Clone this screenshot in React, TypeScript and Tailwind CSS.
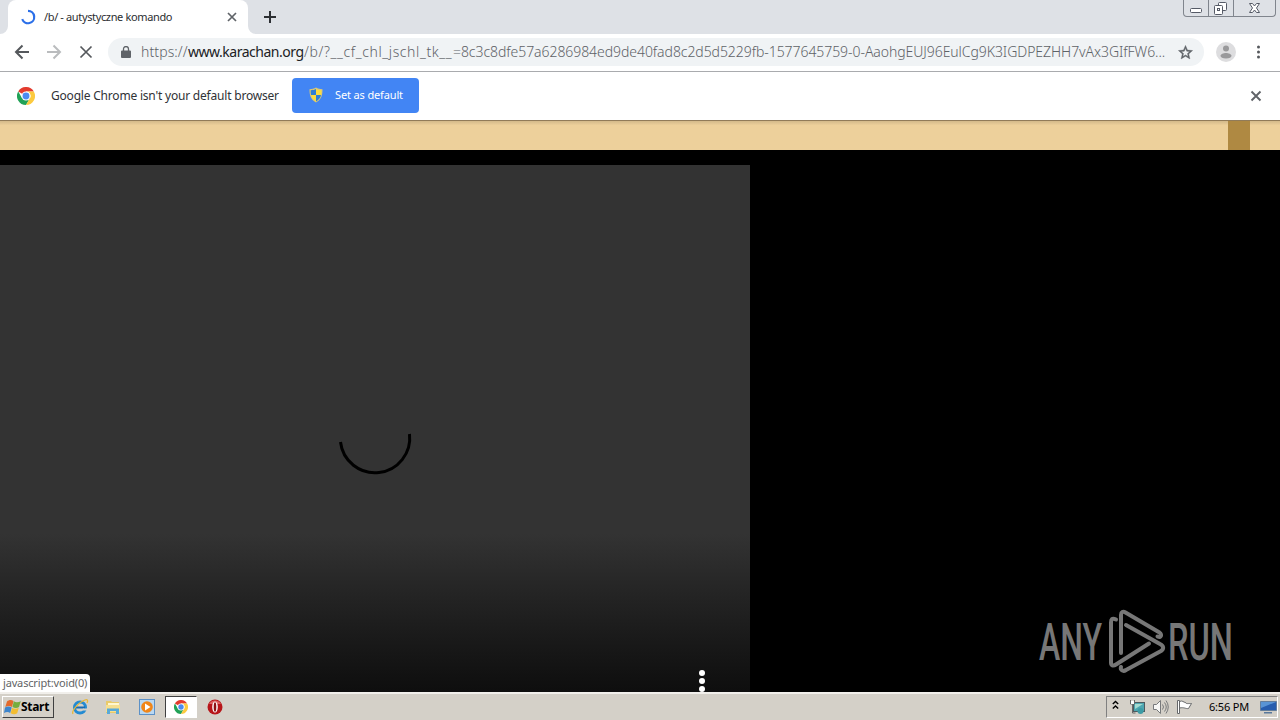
import type { ReactNode } from 'react';
import { clsx } from 'clsx';

const URL_PATH = '/b/?__cf_chl_jschl_tk__';
const URL_TOKEN = '=8c3c8dfe57a6286984ed9de40fad8c2d5d5229fb-1577645759-0-AaohgEUJ96EulCg9K3IGDPEZHH7vAx3GIfFW6...';

function ChromeLogo({ className }: { className?: string }) {
  return (
    <svg viewBox="0 0 48 48" className={className}>
      <circle cx="24" cy="24" r="24" fill="#fff" />
      <path d="M24 24 3.2 12A24 24 0 0 1 44.8 12H24Z" fill="#e33b2e" />
      <path d="M3.2 12A24 24 0 0 0 24 48L34.4 30 24 24 13.6 30Z" fill="#21a257" />
      <path d="M44.8 12A24 24 0 0 1 24 48L34.4 30A12 12 0 0 0 24 12Z" fill="#fcca3f" />
      <circle cx="24" cy="24" r="12" fill="#fff" />
      <circle cx="24" cy="24" r="9.2" fill="#4b8bf0" />
    </svg>
  );
}

function TabStrip() {
  return (
    <div className="relative flex h-[34px] bg-[#dee1e6]">
      <div className="relative ml-2 flex h-full w-60 items-center rounded-t-lg bg-white pl-3">
        <svg viewBox="0 0 8 8" className="absolute bottom-0 -left-2 size-2">
          <path d="M8 0v8H0a8 8 0 0 0 8-8Z" fill="#fff" />
        </svg>
        <svg viewBox="0 0 8 8" className="absolute -right-2 bottom-0 size-2">
          <path d="M0 0v8h8a8 8 0 0 1-8-8Z" fill="#fff" />
        </svg>
        <svg viewBox="0 0 16 16" className="size-4 shrink-0" fill="none" stroke="#2b6fe8" strokeWidth="2.200">
          <path d="M8 1.800A6.200 6.200 0 1 1 2.200 10.200" />
        </svg>
        <span className="ml-2 text-[11px] tracking-[-0.36px] whitespace-nowrap text-[#2c2e31]">
          /b/ - autystyczne komando
        </span>
        <svg viewBox="0 0 10 10" className="absolute top-3 left-[219px] size-[10px]" stroke="#5f6368" strokeWidth="1.700">
          <path d="M1 1l8 8M9 1l-8 8" />
        </svg>
      </div>
      <svg viewBox="0 0 12 12" className="mt-[11px] ml-4 size-3" stroke="#2c2f33" strokeWidth="2">
        <path d="M6 0v12M0 6h12" />
      </svg>
      <div className="absolute top-0 right-[4px] flex h-[17px] w-[93px] rounded-b border border-t-0 border-[#80858d]">
        <div className="w-[25px] border-r border-[#80858d]">
          <svg viewBox="0 0 25 16" className="h-4 w-[25px]" fill="#fff" stroke="#555a66">
            <rect x="6.500" y="8.500" width="11" height="4" rx="1" />
          </svg>
        </div>
        <div className="w-[25px] border-r border-[#80858d]">
          <svg viewBox="0 0 25 16" className="h-4 w-[25px]" fill="#fff" stroke="#555a66">
            <rect x="9.500" y="2.500" width="8" height="8" rx="1" />
            <rect x="5.500" y="5.500" width="8" height="9" rx="1" />
            <rect x="8.500" y="8.500" width="2" height="2" />
          </svg>
        </div>
        <svg viewBox="0 0 41 16" className="h-4 w-[41px]" fill="#fff" stroke="#555a66" strokeLinejoin="round">
          <path d="M15.500 3.500h3l2 2.500 2-2.500h3L22.500 8l3 4.500h-3l-2-2.500-2 2.500h-3l3-4.500Z" />
        </svg>
      </div>
    </div>
  );
}

function Toolbar() {
  return (
    <div className="flex h-[38px] items-center border-b border-[#a9abae] bg-white pb-px pl-[14px]">
      <svg viewBox="0 0 16 16" className="size-4" fill="none" stroke="#55585c" strokeWidth="2">
        <path d="M15 8H2M8.500 1.500 2 8l6.500 6.500" />
      </svg>
      <svg viewBox="0 0 16 16" className="ml-4 size-4" fill="none" stroke="#babcbe" strokeWidth="2">
        <path d="M1 8h13M7.500 1.500 14 8l-6.500 6.500" />
      </svg>
      <svg viewBox="0 0 16 16" className="ml-4 size-4" fill="none" stroke="#55585c" strokeWidth="1.700">
        <path d="M2.500 2.500l11 11M13.500 2.500l-11 11" />
      </svg>
      <div className="ml-[14px] flex h-7 w-[1096px] items-center rounded-full bg-[#f0f3f5] pl-[13px]">
        <svg viewBox="0 0 10 12" className="h-3 w-[10px]" fill="#5f6368">
          <path d="M1 4.500h8a1 1 0 0 1 1 1V11a1 1 0 0 1-1 1H1a1 1 0 0 1-1-1V5.500a1 1 0 0 1 1-1Z" />
          <path d="M2.500 5V3a2.500 2.500 0 0 1 5 0v2" fill="none" stroke="#5f6368" strokeWidth="1.300" />
        </svg>
        <div className="mb-px ml-[10px] flex w-[1026px] text-[14px] font-light whitespace-nowrap text-[#5e6267]">
          <span className="w-[47px] tracking-[0.1px]">https://</span>
          <span className="w-[116px] font-normal tracking-[-0.48px] text-[#202124]">www.karachan.org</span>
          <span className="w-[149px] tracking-[0.62px]">{URL_PATH}</span>
          <span className="tracking-[-0.06px]">{URL_TOKEN}</span>
        </div>
        <svg viewBox="0 0 24 24" className="ml-[10px] size-[17px] shrink-0" fill="#5f6368" stroke="#5f6368" strokeWidth=".6">
          <path d="m22 9.240-7.190-.62L12 2 9.190 8.630 2 9.240l5.460 4.730L5.820 21 12 17.270 18.180 21l-1.630-7.030ZM12 15.400l-3.760 2.270 1-4.280-3.320-2.880 4.380-.38L12 6.100l1.710 4.040 4.380.38-3.320 2.880 1 4.280Z" />
        </svg>
      </div>
      <svg viewBox="0 0 20 20" className="ml-3 size-5">
        <circle cx="10" cy="10" r="10" fill="#dddddf" />
        <circle cx="10" cy="6.500" r="3" fill="#99999b" />
        <path d="M4.500 14c0-2 3-3 5.500-3s5.500 1 5.500 3c0 1-2 2.500-5.500 2.500S4.500 15 4.500 14Z" fill="#99999b" />
      </svg>
      <svg viewBox="0 0 4 16" className="ml-5 h-4 w-1" fill="#55585c">
        <circle cx="2.500" cy="3" r="1.500" />
        <circle cx="2.500" cy="8" r="1.500" />
        <circle cx="2.500" cy="13" r="1.500" />
      </svg>
    </div>
  );
}

function ShieldIcon() {
  return (
    <svg viewBox="0 0 16 16" className="size-4">
      <path d="M8 .5c2 1.300 4 1.700 6.500 1.700 0 6-1 10-6.500 13.300C2.500 12.200 1.500 8.200 1.500 2.200 4 2.200 6 1.800 8 .5Z" fill="#d9c777" />
      <path d="M8 2v6H3C2.700 6.500 2.700 5 2.700 3.200 5 3.200 6.500 2.800 8 2ZM8 8h5c-.5 2.800-2 4.700-5 6.500Z" fill="#2f7fd4" />
      <path d="M8 2v6h5c.3-1.500.3-3 .3-4.800C11 3.200 9.500 2.800 8 2ZM8 8H3c.5 2.800 2 4.700 5 6.500Z" fill="#fbdc3e" />
    </svg>
  );
}

function InfoBar() {
  return (
    <div className="flex h-[49px] items-center border-b border-[#917b59] bg-white pl-[17px]">
      <ChromeLogo className="size-[18px]" />
      <span className="ml-4 w-[241px] text-[12px] tracking-[-0.2px] whitespace-nowrap text-[#303236]">
        Google Chrome isn't your default browser
      </span>
      <button className="mb-[2px] flex h-[35px] w-[127px] items-center rounded bg-[#4285f4] pl-4 text-[11px] whitespace-nowrap text-white">
        <ShieldIcon />
        <span className="ml-[11px] tracking-[-0.14px]">Set as default</span>
      </button>
      <svg viewBox="0 0 12 12" className="mr-[18px] ml-auto size-3" stroke="#606368" strokeWidth="1.900">
        <path d="M1.500 1.500l9 9M10.500 1.500l-9 9" />
      </svg>
    </div>
  );
}

function AnyRunLogo() {
  return (
    <svg viewBox="0 0 194 64" className="absolute right-[47px] bottom-[18px] h-16 w-[194px] overflow-visible" fill="#777">
      <g fontSize="52" fontWeight="500" fontFamily="Roboto">
        <text x="0" y="50" textLength="63" lengthAdjust="spacingAndGlyphs">
          ANY
        </text>
        <text x="129" y="50" textLength="65" lengthAdjust="spacingAndGlyphs">
          RUN
        </text>
      </g>
      <g fill="none" stroke="#777" strokeWidth="4" strokeLinejoin="round" strokeLinecap="round">
        <path d="M77 9.500c-4-2-5 0-5 3v40c0 3 2 4 5 2l33-21" />
        <path d="M82 43V5c0-3 2-4 4.500-2.500l34 20c2.500 2 2 6-2 4" />
        <path d="M87 15l34 19c4 2 4 5 1 7L87 60c-3 2-6 0-5-3" />
      </g>
    </svg>
  );
}

function Page() {
  return (
    <div className="relative h-[571px] bg-black">
      <div className="flex h-[29px] justify-end bg-[#edd09b] bg-linear-to-b from-[#d3b98a] to-[#edd09b] to-15% pr-[30px]">
        <div className="w-[22px] bg-[#af8942]" />
      </div>
      <div className="relative mt-[15px] h-[527px] w-[750px] bg-[#333] bg-linear-to-b from-[#333] from-70% to-[#0e0e0e]">
        <svg viewBox="0 0 76 46" className="absolute top-[265px] left-[337px] h-[46px] w-[76px]">
          <path d="M3.500 12A34.500 34.500 0 0 0 72.500 4" fill="none" stroke="#000" strokeWidth="3" />
        </svg>
        <div className="absolute right-[45px] bottom-0 flex flex-col gap-[2px]">
          <span className="size-[6px] rounded-full bg-white" />
          <span className="size-[6px] rounded-full bg-white" />
          <span className="size-[6px] rounded-full bg-white" />
        </div>
      </div>
      <AnyRunLogo />
      <div className="absolute bottom-0 left-0 flex h-[18px] w-[90px] items-center rounded-tr bg-white pl-[3px] text-[11px] tracking-[-0.16px] whitespace-nowrap text-[#626466]">
        javascript:void(0)
      </div>
    </div>
  );
}

function QuickItem({ active, children }: { active?: boolean; children: ReactNode }) {
  return (
    <div
      className={clsx(
        'flex h-[22px] w-8 items-center justify-center',
        active && 'border border-t-[#404040] border-r-white border-b-white border-l-[#404040] bg-white',
      )}
    >
      {children}
    </div>
  );
}

function Taskbar() {
  return (
    <div className="flex h-7 items-center border-t-2 border-[#f1efeb] bg-[#d4d0c8] pt-[2px] pb-[2px] pl-[2px]">
      <div className="flex h-[22px] w-[52px] items-center border border-t-white border-r-[#404040] border-b-[#404040] border-l-white pl-px text-[12px] font-bold text-black">
        <svg viewBox="0 0 17 16" className="h-4 w-[17px] shrink-0">
          <path d="M3 2.500c2-2 4.500-2 6.500-.5L8 8C6 6.500 4 6.500 1.300 8Z" fill="#e36a2c" />
          <path d="M9.800 2.300c2 1.500 4.500 1.200 7 0L15 8c-2 1.500-4.500 1.200-6.500 0Z" fill="#76ad3e" />
          <path d="M1 8.500c2.500-1.500 4.500-1.500 6.700 0L6.200 14c-2-1.500-4-1.300-6.200 0Z" fill="#3d85cc" />
          <path d="M8.200 8.700c2 1.500 4.500 1.300 6.600 0L13.200 14.200c-2 1.500-4.500 1.300-6.600 0Z" fill="#f2bd32" />
        </svg>
        <span className="tracking-[-0.3px]">Start</span>
      </div>
      <div className="ml-[10px] flex">
        <QuickItem>
          <svg viewBox="0 0 18 18" className="size-[18px]" fill="none">
            <circle cx="9" cy="9.500" r="5.500" stroke="#248bd2" strokeWidth="3" />
            <path d="M4 9.500h10" stroke="#176bb3" strokeWidth="2" />
            <path d="M12 11.500h5" stroke="#d4d0c8" strokeWidth="2" />
            <path d="M2 16C0 13 8 4 14 2c3-1 3 1 2 3" stroke="#e8b83b" strokeWidth="1.300" />
          </svg>
        </QuickItem>
        <div className="ml-px flex gap-[2px]">
          <QuickItem>
            <svg viewBox="0 0 16 16" className="size-4">
              <path d="M1 2h5l1 1h7v11H1Z" fill="#e9ca69" />
              <path d="M3 4h11v3H3Z" fill="#fff7cf" />
              <path d="M1 6h14v7H1Z" fill="#f6df8f" />
              <path d="M2 15V9.500h12V15h-3v-3H5v3Z" fill="#59a9d8" />
            </svg>
          </QuickItem>
          <QuickItem>
            <svg viewBox="0 0 16 16" className="size-4">
              <rect x=".5" y=".5" width="15" height="15" fill="#b9d8f2" stroke="#5c91c7" />
              <circle cx="8" cy="8" r="5.800" fill="#f08619" />
              <path d="M6 4.500v7L11.500 8Z" fill="#fff" />
            </svg>
          </QuickItem>
          <QuickItem active>
            <ChromeLogo className="size-[14px]" />
          </QuickItem>
          <QuickItem>
            <svg viewBox="0 0 16 16" className="size-4">
              <circle cx="8" cy="8" r="7.500" fill="#b71519" />
              <path d="M2 5a7 7 0 0 1 12 0Z" fill="#de6261" />
              <ellipse cx="8" cy="8" rx="2.800" ry="5.500" fill="#fff" />
              <ellipse cx="8" cy="8" rx="1.300" ry="4.800" fill="#8d1113" />
            </svg>
          </QuickItem>
        </div>
      </div>
      <div className="mr-[2px] ml-auto flex h-[22px] w-[172px] items-center border border-t-[#808080] border-r-white border-b-white border-l-[#808080] pl-[5px]">
        <svg viewBox="0 0 7 10" className="mb-1 h-[10px] w-[7px]" fill="none" stroke="#000" strokeWidth="1.400">
          <path d="M.8 4 3.500 1.500 6.200 4M.8 8.500 3.500 6l2.700 2.500" />
        </svg>
        <svg viewBox="0 0 16 16" className="ml-[10px] size-4">
          <rect x="4.500" y="3.500" width="11" height="9" fill="#4da6b0" stroke="#4d5b60" />
          <path d="M6 5h8l-8 5Z" fill="#a5dbd1" />
          <path d="M1.500 1v4h4V1M3.500 5v9h3" fill="none" stroke="#686868" />
          <path d="M2 2h3v3H2Z" fill="#fff" />
          <circle cx="11.500" cy="12" r="3" fill="#3c9ba5" />
        </svg>
        <svg viewBox="0 0 17 16" className="ml-[7px] h-4 w-[17px]" fill="none" stroke="#77797b">
          <path d="M1.500 5.500h3l4-4v13l-4-4h-3Z" fill="#f7f7f5" />
          <path d="M10.500 5.500q2 2.500 0 5M12.500 3.500q3.500 4.500 0 9M14 1.500q4.500 6.500 0 13" />
        </svg>
        <svg viewBox="0 0 17 16" className="ml-[7px] h-4 w-[17px]" fill="#fff" stroke="#66686a">
          <path d="M3.500 2.500c3-1.500 4 1 6 1 0 1.500 3 1 6 1l-3 5c-3 .500-4-1.500-9-.500" />
          <path d="M1.500 1.500h2v13h-2Z" />
        </svg>
        <span className="ml-4 w-[44px] text-[11px] tracking-[-0.2px] whitespace-nowrap text-black">6:56 PM</span>
        <svg viewBox="0 0 17 14" className="ml-[7px] h-[14px] w-[17px]">
          <path d="M.5 1.500h16v9H.500Z" fill="#275dae" stroke="#647e9c" />
          <path d="M1 2h15L1 8Z" fill="#5994d5" />
          <path d="M4 12h8v1.500H4Z" fill="#59789b" />
        </svg>
      </div>
    </div>
  );
}

export default function App() {
  return (
    <div className="h-[720px] w-[1280px] overflow-hidden bg-black font-['Noto_Sans','DejaVu_Sans',sans-serif]">
      <TabStrip />
      <Toolbar />
      <InfoBar />
      <Page />
      <Taskbar />
    </div>
  );
}
